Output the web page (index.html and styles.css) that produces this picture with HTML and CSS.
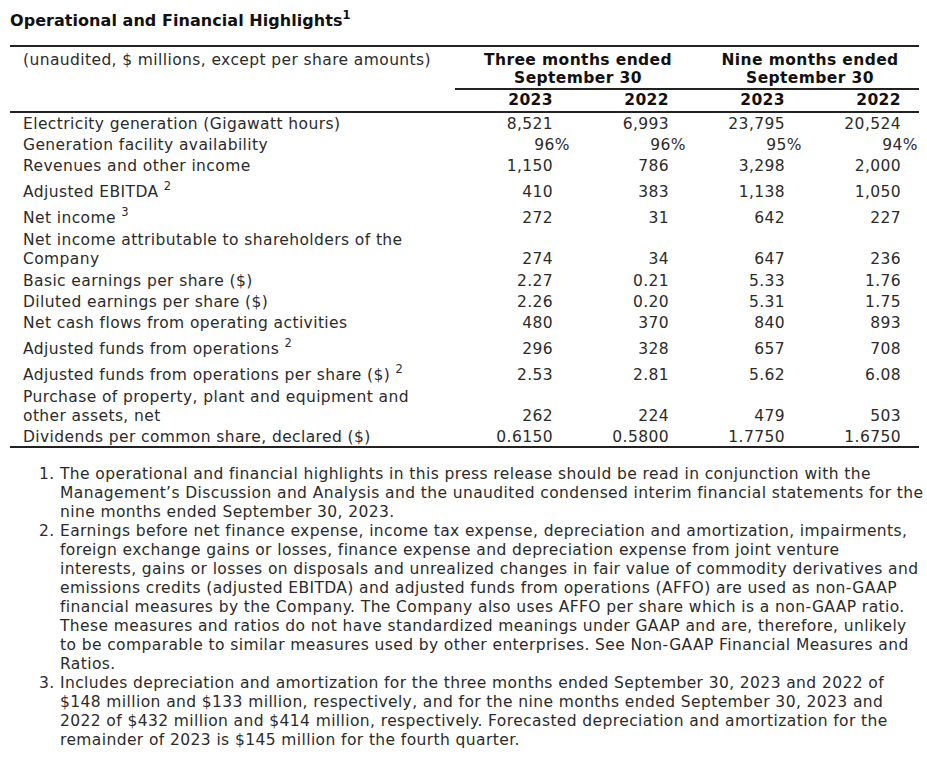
FILE: index.html
```html
<!DOCTYPE html>
<html>
<head>
<meta charset="utf-8">
<link rel="stylesheet" href="styles.css">
</head>
<body>
<div class="page">
  <h2 class="title">Operational and Financial Highlights<sup>1</sup></h2>
  <table class="hl">
    <colgroup>
      <col class="c-lbl"><col class="c-num"><col class="c-num"><col class="c-num"><col class="c-num">
    </colgroup>
    <thead>
      <tr>
        <th class="lbl hdr" rowspan="2">(unaudited, $ millions, except per share amounts)</th>
        <th class="grp" colspan="2">Three months ended<br>September 30</th>
        <th class="grp" colspan="2">Nine months ended<br>September 30</th>
      </tr>
      <tr>
        <th class="yr">2023</th><th class="yr">2022</th><th class="yr">2023</th><th class="yr">2022</th>
      </tr>
    </thead>
    <tbody>
      <tr class="first"><td class="lbl">Electricity generation (Gigawatt hours)</td><td>8,521</td><td>6,993</td><td>23,795</td><td>20,524</td></tr>
      <tr><td class="lbl">Generation facility availability</td><td class="pct">96%</td><td class="pct">96%</td><td class="pct">95%</td><td class="pct">94%</td></tr>
      <tr><td class="lbl">Revenues and other income</td><td>1,150</td><td>786</td><td>3,298</td><td>2,000</td></tr>
      <tr class="tall"><td class="lbl">Adjusted EBITDA <sup>2</sup></td><td>410</td><td>383</td><td>1,138</td><td>1,050</td></tr>
      <tr class="tall"><td class="lbl">Net income <sup>3</sup></td><td>272</td><td>31</td><td>642</td><td>227</td></tr>
      <tr class="wrap"><td class="lbl">Net income attributable to shareholders of the Company</td><td>274</td><td>34</td><td>647</td><td>236</td></tr>
      <tr><td class="lbl">Basic earnings per share ($)</td><td>2.27</td><td>0.21</td><td>5.33</td><td>1.76</td></tr>
      <tr><td class="lbl">Diluted earnings per share ($)</td><td>2.26</td><td>0.20</td><td>5.31</td><td>1.75</td></tr>
      <tr><td class="lbl">Net cash flows from operating activities</td><td>480</td><td>370</td><td>840</td><td>893</td></tr>
      <tr class="tall"><td class="lbl">Adjusted funds from operations <sup>2</sup></td><td>296</td><td>328</td><td>657</td><td>708</td></tr>
      <tr class="tall"><td class="lbl">Adjusted funds from operations per share ($) <sup>2</sup></td><td>2.53</td><td>2.81</td><td>5.62</td><td>6.08</td></tr>
      <tr class="wrap"><td class="lbl">Purchase of property, plant and equipment and other assets, net</td><td>262</td><td>224</td><td>479</td><td>503</td></tr>
      <tr class="last"><td class="lbl">Dividends per common share, declared ($)</td><td>0.6150</td><td>0.5800</td><td>1.7750</td><td>1.6750</td></tr>
    </tbody>
  </table>
  <ol class="notes">
    <li>The operational and financial highlights in this press release should be read in conjunction with the Management’s Discussion and Analysis and the unaudited condensed interim financial statements for the nine months ended September 30, 2023.</li>
    <li>Earnings before net finance expense, income tax expense, depreciation and amortization, impairments,<br>foreign exchange gains or losses, finance expense and depreciation expense from joint venture<br>interests, gains or losses on disposals and unrealized changes in fair value of commodity derivatives and<br>emissions credits (adjusted EBITDA) and adjusted funds from operations (AFFO) are used as non-GAAP<br>financial measures by the Company. The Company also uses AFFO per share which is a non-GAAP ratio.<br>These measures and ratios do not have standardized meanings under GAAP and are, therefore, unlikely<br>to be comparable to similar measures used by other enterprises. See Non-GAAP Financial Measures and<br>Ratios.</li>
    <li>Includes depreciation and amortization for the three months ended September 30, 2023 and 2022 of $148 million and $133 million, respectively, and for the nine months ended September 30, 2023 and 2022 of $432 million and $414 million, respectively. Forecasted depreciation and amortization for the remainder of 2023 is $145 million for the fourth quarter.</li>
  </ol>
</div>
</body>
</html>
```

FILE: styles.css
```css
html, body {
  margin: 0;
  padding: 0;
  background: #fff;
}
.page {
  padding: 8px 0 0 10px;
  font-family: "DejaVu Sans", Verdana, sans-serif;
  color: #2b2b2b;
  font-size: 15.5px;
  letter-spacing: 0.4px;
}
.title {
  margin: 0 0 12px 0;
  font-size: 16px;
  letter-spacing: 0.05px;
  font-weight: bold;
  color: #111;
  line-height: 25px;
}
.title sup {
  font-size: 11.5px;
  vertical-align: 7px;
  line-height: 0;
}
.hl {
  width: 909px;
  table-layout: fixed;
  border-collapse: collapse;
  border-top: 2px solid #222;
  border-bottom: 2px solid #222;
}
.c-lbl { width: 445px; }
.c-num { width: 116px; }
.hl th, .hl td {
  padding: 0;
  line-height: 19px;
}
.hl th {
  font-weight: bold;
  color: #111;
}
.hl .hdr {
  font-weight: normal;
  color: #2b2b2b;
  text-align: left;
  vertical-align: top;
  padding: 4px 0 0 13px;
  border-bottom: 2px solid #222;
}
.hl .grp {
  text-align: center;
  vertical-align: top;
  padding: 4px 0 1px 14px;
  border-bottom: 2px solid #222;
  line-height: 18px;
}
.hl .yr {
  text-align: right;
  padding: 1px 18px 1px 0;
  border-bottom: 2px solid #222;
}
.hl td {
  text-align: right;
  vertical-align: bottom;
  padding: 1px 18px 1px 0;
}
.hl td.lbl {
  text-align: left;
  padding-left: 13px;
  padding-right: 10px;
}
.hl td.pct {
  padding-right: 1px;
}
.hl sup {
  font-size: 11.5px;
  line-height: 0;
  vertical-align: 7px;
}
.hl tr.first td {
  padding-top: 2px;
}
.hl tr.tall td {
  padding-top: 6px;
}
.hl tr.wrap td {
  padding-top: 2px;
  padding-bottom: 2px;
}
.hl tr.last td {
  padding-bottom: 0;
  line-height: 17px;
}
.notes {
  margin: 17px 0 0 0;
  padding-left: 50px;
  line-height: 19px;
}
```
